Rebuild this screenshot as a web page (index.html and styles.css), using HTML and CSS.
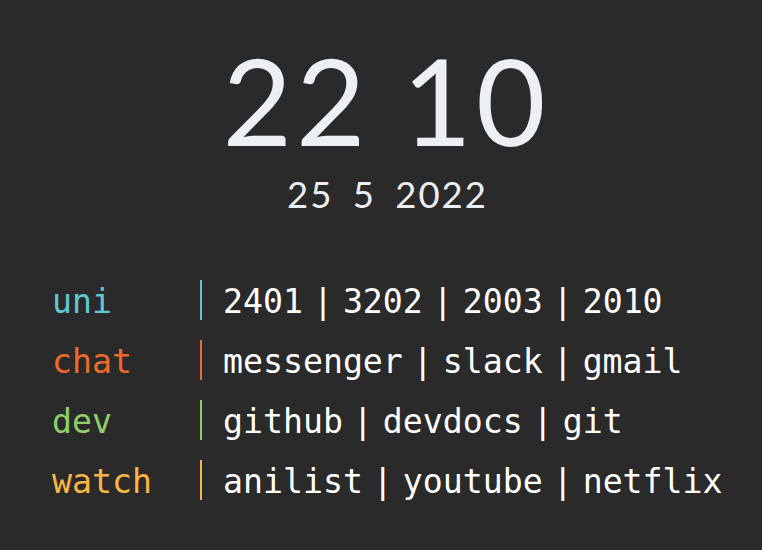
FILE: index.html
```html
<!DOCTYPE html>
<html>
<head>
<meta charset="utf-8">
<link rel="stylesheet" href="styles.css">
</head>
<body>
<main class="page">
  <header class="time">
    <div class="clock">22 10</div>
    <div class="date">25 5 2022</div>
  </header>
  <section class="links">
    <div class="row uni">
      <span class="label">uni</span>
      <span class="items"><a>2401</a> | <a>3202</a> | <a>2003</a> | <a>2010</a></span>
    </div>
    <div class="row chat">
      <span class="label">chat</span>
      <span class="items"><a>messenger</a> | <a>slack</a> | <a>gmail</a></span>
    </div>
    <div class="row dev">
      <span class="label">dev</span>
      <span class="items"><a>github</a> | <a>devdocs</a> | <a>git</a></span>
    </div>
    <div class="row watch">
      <span class="label">watch</span>
      <span class="items"><a>anilist</a> | <a>youtube</a> | <a>netflix</a></span>
    </div>
  </section>
</main>
</body>
</html>
```
FILE: styles.css
```css
html, body {
  margin: 0;
  padding: 0;
  background: #2a2a2a;
}
.page {
  width: 762px;
  height: 550px;
  display: flex;
  flex-direction: column;
}
.time {
  display: flex;
  flex-direction: column;
  align-items: center;
  padding-top: 40px;
  padding-left: 10px;
  color: #eceff4;
  font-family: Lato, "Open Sans", sans-serif;
}
.clock {
  font-size: 120px;
  line-height: 120px;
  letter-spacing: 4px;
  word-spacing: -2px;
}
.date {
  margin-top: 14px;
  padding-left: 3px;
  font-size: 36.5px;
  line-height: 40px;
  letter-spacing: 2px;
  word-spacing: 8px;
}
.links {
  margin-top: 56px;
  padding-left: 52px;
  display: flex;
  flex-direction: column;
}
.row {
  height: 60px;
  display: flex;
  align-items: center;
  font-family: "DejaVu Sans Mono", "Liberation Mono", monospace;
  font-size: 33.2px;
}
.label {
  width: 148px;
  line-height: 36px;
  padding-top: 4px;
}
.items {
  border-left: 2px solid currentColor;
  padding-left: 21px;
  padding-top: 4px;
  line-height: 36px;
  color: #ffffff;
  word-spacing: -10px;
}
.items a {
  color: #ffffff;
  word-spacing: normal;
}
.uni .label { color: #5fc9d3; }
.uni .items { border-color: #5fc9d3; }
.chat .label { color: #ee6a2b; }
.chat .items { border-color: #ee6a2b; }
.dev .label { color: #8fcf68; }
.dev .items { border-color: #8fcf68; }
.watch .label { color: #fbb545; }
.watch .items { border-color: #fbb545; }
```
